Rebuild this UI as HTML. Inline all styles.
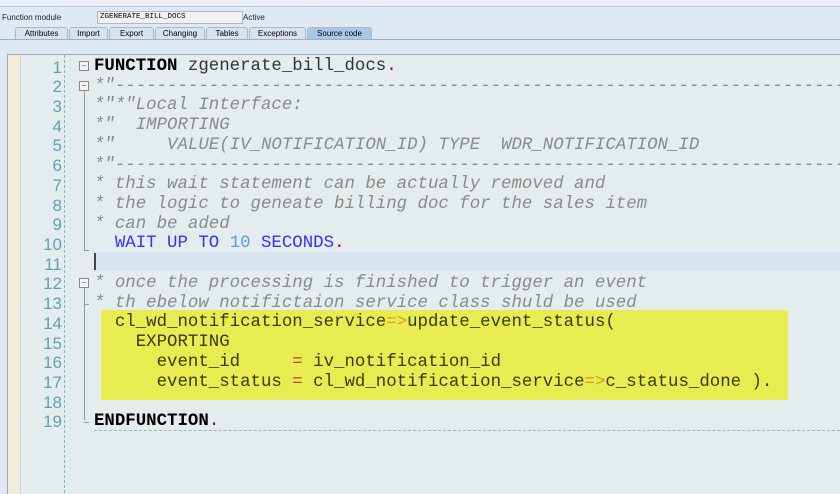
<!DOCTYPE html><html><head><style>
body{margin:0;width:840px;height:493px;overflow:hidden;background:#e4ecee;font-family:"Liberation Sans",sans-serif;position:relative}
.hdr{position:absolute;left:0;top:0;width:840px;height:40px;background:#dfe9f3}
.top{position:absolute;left:0;top:0;width:840px;height:6px;background:#e8eef4;border-bottom:1px solid #b8c8d8}
.lbl{position:absolute;font-size:8px;color:#222}
.inp{position:absolute;left:97px;top:11px;width:142px;height:11px;border:1px solid #b0b8c0;background:#eef2f5;font-family:"Liberation Mono",monospace;font-size:7.5px;line-height:11px;padding-left:2px}
.tab{position:absolute;top:27px;height:11px;font-size:8px;line-height:11px;text-align:center;background:#dbe3ea;border:1px solid #aab8c6;border-bottom:none;border-radius:3px 3px 0 0}
.pane{position:absolute;left:0;top:39px;width:840px;height:454px;background:#dfe9f3;border-top:1px solid #9ab0c8}
.ed{position:absolute;left:7px;top:54px;width:833px;height:439px;background:#e4ecee;border-top:1px solid #a0a8b0;border-left:1px solid #a0a8b0}
.beige{position:absolute;left:8px;top:55px;width:12px;height:438px;background:#f2ecda}
.gut{position:absolute;left:20px;top:55px;width:43px;height:438px;background:#e4ecee;border-left:1px solid #c8d0d4;border-right:1px dashed #7fb8c0}
.ln{position:absolute;left:20px;width:42px;text-align:right;font-family:"Liberation Sans",sans-serif;font-size:17px;color:#5aa4ac}
.code{position:absolute;left:94px;font-family:"Liberation Mono",monospace;font-size:17.4px;white-space:pre;color:#333}
.c{color:#8a8a8a;font-style:italic}
.hl{position:absolute;left:101px;top:310px;width:687px;height:90px;background:#e8ec50}
.cur{position:absolute;left:94px;top:252px;width:746px;height:19px;background:#d8e4f0}
.fold{position:absolute;left:79px;width:8px;height:8px;border:1px solid #888;background:#f4f4f4;font-size:8px;line-height:7px;text-align:center;color:#555}
.vl{position:absolute;left:84px;width:1px;background:#999}
</style></head><body>
<div class="hdr"></div><div class="top"></div>
<div class="lbl" style="left:2px;top:13px">Function module</div>
<div class="inp">ZGENERATE_BILL_DOCS</div>
<div class="lbl" style="left:243px;top:13px">Active</div>
<div class="tab" style="left:15px;width:51px">Attributes</div>
<div class="tab" style="left:69px;width:37px">Import</div>
<div class="tab" style="left:109px;width:43px">Export</div>
<div class="tab" style="left:155px;width:48px">Changing</div>
<div class="tab" style="left:206px;width:40px">Tables</div>
<div class="tab" style="left:249px;width:55px">Exceptions</div>
<div class="tab" style="left:307px;width:63px;background:#a8c8e8">Source code</div>
<div class="pane"></div>
<div class="ed"></div><div class="beige"></div><div class="gut"></div>
<div class="cur"></div>
<div style="position:absolute;left:94px;top:253px;width:2px;height:17px;background:#444"></div>
<div class="hl"></div>
<div style="position:absolute;left:94px;top:430px;width:746px;border-top:1px dashed #9ab8bc"></div>
<div class="vl" style="top:82px;height:168px"></div>
<div class="vl" style="top:287px;height:133px"></div>
<div style="position:absolute;left:84px;top:250px;width:5px;border-top:1px solid #999"></div>
<div style="position:absolute;left:84px;top:304px;width:5px;border-top:1px solid #999"></div>
<div style="position:absolute;left:84px;top:422px;width:5px;border-top:1px solid #999"></div>
<div class="fold" style="top:61px">−</div>
<div class="fold" style="top:81px">−</div>
<div class="fold" style="top:278px">−</div>
<div id="L"></div>
<script>
var lines=[
'<b style="color:#000">FUNCTION</b> zgenerate_bill_docs<span style="color:#800080">.</span>',
'<span class="c">*"----------------------------------------------------------------------</span>',
'<span class="c">*"*"Local Interface:</span>',
'<span class="c">*"  IMPORTING</span>',
'<span class="c">*"     VALUE(IV_NOTIFICATION_ID) TYPE  WDR_NOTIFICATION_ID</span>',
'<span class="c">*"----------------------------------------------------------------------</span>',
'<span class="c">* this wait statement can be actually removed and</span>',
'<span class="c">* the logic to geneate billing doc for the sales item</span>',
'<span class="c">* can be aded</span>',
'  <span style="color:#3434f0">WAIT UP TO</span> <span style="color:#5aa0e0">10</span> <span style="color:#3434f0">SECONDS</span><span style="color:#800080">.</span>',
'',
'<span class="c">* once the processing is finished to trigger an event</span>',
'<span class="c">* th ebelow notifictaion service class shuld be used</span>',
'<span style="color:#3a3a10">  cl_wd_notification_service<span style="color:#d0a020">=&gt;</span>update_event_status(</span>',
'<span style="color:#3a3a10">    EXPORTING</span>',
'<span style="color:#3a3a10">      event_id     <span style="color:#c84020">=</span> iv_notification_id</span>',
'<span style="color:#3a3a10">      event_status <span style="color:#c84020">=</span> cl_wd_notification_service<span style="color:#d0a020">=&gt;</span>c_status_done ).</span>',
'',
'<b style="color:#000">ENDFUNCTION</b><span style="color:#800080">.</span>'];
var h='';
for(var i=0;i<19;i++){var t=57+i*19.72;
h+='<div class="ln" style="top:'+(t+0.5)+'px;line-height:19px">'+(i+1)+'</div>';
h+='<div class="code" style="top:'+t+'px;line-height:19.7px">'+lines[i]+'</div>';}
document.getElementById('L').innerHTML=h;
</script>
</body></html>
